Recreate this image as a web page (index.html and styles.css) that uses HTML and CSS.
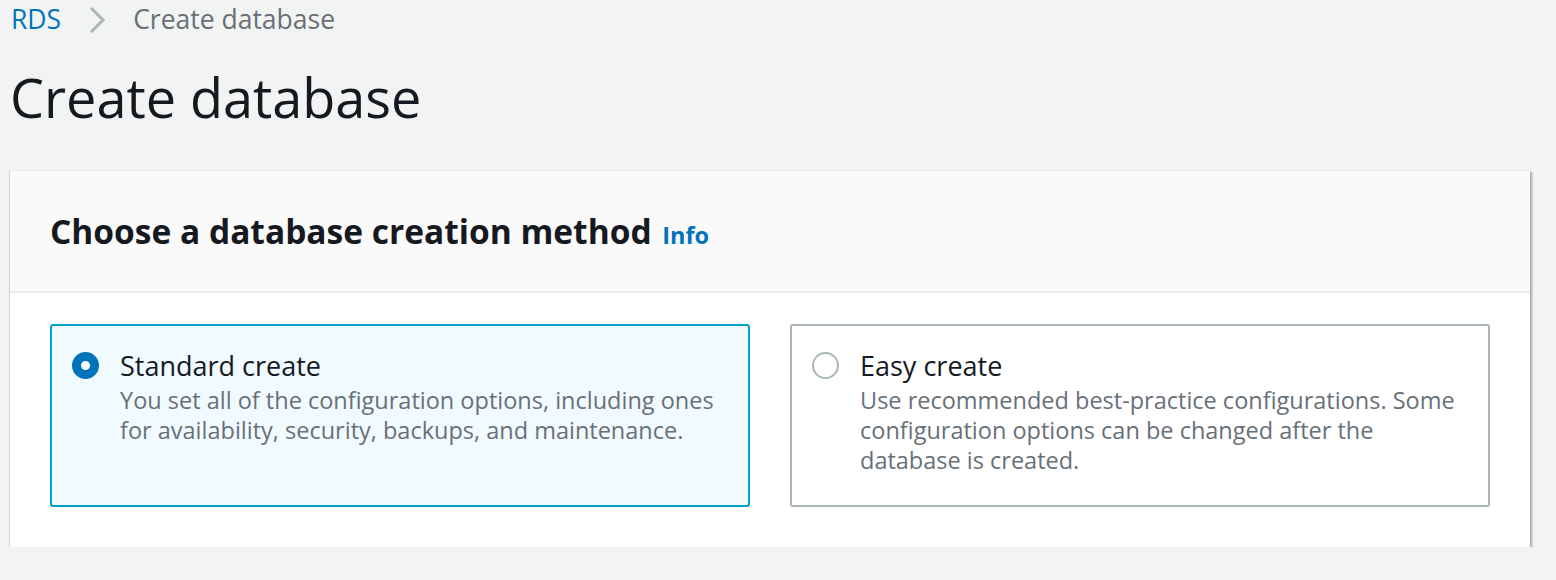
FILE: index.html
```html
<!DOCTYPE html>
<html lang="en">
  <head>
    <meta charset="UTF-8" />
    <meta name="viewport" content="width=device-width, initial-scale=1.0" />
    <title>Create database</title>
    <link rel="stylesheet" href="styles.css">
  </head>
  <body>
    <div class="breadcrumbs">
      <a href="#" class="crumb-link">RDS</a>
      <svg class="crumb-sep" width="20" height="30" viewBox="0 0 20 30">
        <path d="M4 3 L16 15 L4 27" fill="none" stroke="#aab7b8" stroke-width="3" />
      </svg>
      <span class="crumb-current">Create database</span>
    </div>

    <h1 class="page-title">Create database</h1>

    <div class="container">
      <div class="container-header">
        <h2>Choose a database creation method <a href="#" class="info">Info</a></h2>
      </div>
      <div class="container-body">
        <label class="tile selected">
          <span class="radio checked"></span>
          <span class="tile-text">
            <span class="tile-label">Standard create</span>
            <span class="tile-desc">You set all of the configuration options, including ones for availability, security, backups, and maintenance.</span>
          </span>
        </label>
        <label class="tile">
          <span class="radio"></span>
          <span class="tile-text">
            <span class="tile-label">Easy create</span>
            <span class="tile-desc">Use recommended best-practice configurations. Some configuration options can be changed after the database is created.</span>
          </span>
        </label>
      </div>
    </div>
  </body>
</html>
```

FILE: styles.css
```css
body {
  font-family: "Open Sans", "Noto Sans", sans-serif;
  background-color: #f2f3f3;
  margin: 0;
  padding: 0 26px 0 10px;
  color: #16191f;
}
.breadcrumbs {
  display: flex;
  align-items: center;
  height: 38px;
  padding-left: 1px;
  gap: 27px;
  font-size: 26.5px;
}
.crumb-link {
  color: #0073bb;
  text-decoration: none;
}
.crumb-current {
  color: #687078;
}
.crumb-sep {
  margin: 2px -1px 0 -1px;
}
.page-title {
  margin: 27px 0 0 0;
  font-size: 54px;
  font-weight: 400;
  line-height: 64px;
}
.container {
  margin-top: 41px;
  background: white;
  box-shadow: 2px 2px 2px rgba(0, 28, 36, 0.35), -1px 1px 1px rgba(0, 28, 36, 0.12);
  border-top: 1px solid #eaeded;
}
.container-header {
  background: #fafafa;
  border-bottom: 2px solid #eaeded;
  height: 120px;
  display: flex;
  align-items: center;
  padding: 0 40px;
}
.container-header h2 {
  margin: 0;
  font-size: 33.5px;
  font-weight: 700;
}
.info {
  color: #0073bb;
  font-size: 23.5px;
  text-decoration: none;
  margin-left: 2px;
}
.container-body {
  display: grid;
  grid-template-columns: 1fr 1fr;
  gap: 40px;
  padding: 31px 40px 40px 40px;
}
.tile {
  display: flex;
  gap: 21px;
  height: 183px;
  box-sizing: border-box;
  border: 2px solid #aab7b8;
  border-radius: 3px;
  padding: 21px 20px;
  background: white;
}
.tile.selected {
  border-color: #00a1c9;
  background: #f1faff;
}
.radio {
  flex: none;
  width: 27px;
  height: 27px;
  box-sizing: border-box;
  border: 2px solid #aab7b8;
  border-radius: 50%;
  margin-top: 5px;
  background: white;
}
.radio.checked {
  border: 9px solid #0073bb;
}
.tile-text {
  display: flex;
  flex-direction: column;
}
.tile-label {
  font-size: 27px;
  line-height: 38px;
}
.tile-desc {
  color: #687078;
  font-size: 23.5px;
  line-height: 30px;
}
```
